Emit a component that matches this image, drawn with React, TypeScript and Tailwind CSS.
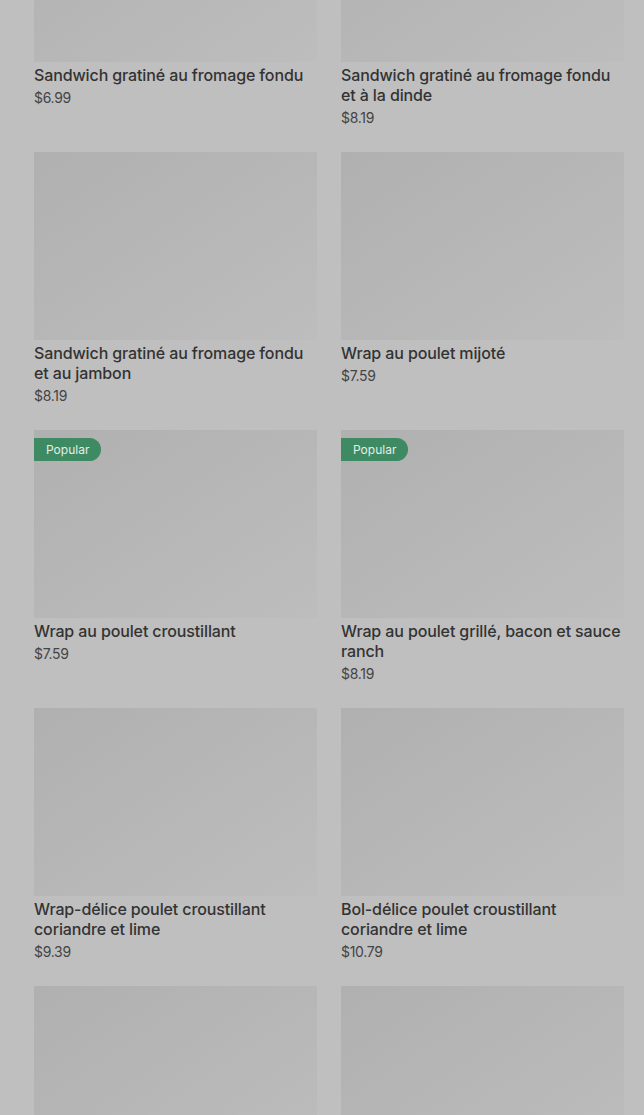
import React from 'react';

interface Item {
  name: string;
  price: string;
  popular?: boolean;
}

const items: Item[] = [
  { name: 'Sandwich gratiné au fromage fondu', price: '$6.99' },
  { name: 'Sandwich gratiné au fromage fondu et à la dinde', price: '$8.19' },
  { name: 'Sandwich gratiné au fromage fondu et au jambon', price: '$8.19' },
  { name: 'Wrap au poulet mijoté', price: '$7.59' },
  { name: 'Wrap au poulet croustillant', price: '$7.59', popular: true },
  { name: 'Wrap au poulet grillé, bacon et sauce ranch', price: '$8.19', popular: true },
  { name: 'Wrap-délice poulet croustillant coriandre et lime', price: '$9.39' },
  { name: 'Bol-délice poulet croustillant coriandre et lime', price: '$10.79' },
  { name: 'Bol au poulet', price: '$9.99' },
  { name: 'Salade au poulet', price: '$9.99' },
];

function MenuCard({ item }: { item: Item }) {
  return (
    <div className="flex flex-col">
      <div className="relative h-[188px] w-full bg-gradient-to-br from-[#b0b0b0] to-[#bdbdbd]">
        {item.popular && (
          <span className="absolute left-0 top-[8px] flex h-[23px] items-center rounded-r-full bg-[#3e8a62] pl-3 pr-3 text-[12px] text-[#e3efe8]">
            Popular
          </span>
        )}
      </div>
      <p className="mt-[3px] text-[16px] font-medium leading-[20px] tracking-[-0.12px] text-[#333333]">{item.name}</p>
      <p className="mt-[3px] text-[14px] leading-[20px] tracking-[-0.3px] text-[#444444]">{item.price}</p>
    </div>
  );
}

export default function App() {
  return (
    <div
      className="h-[1115px] overflow-hidden bg-[#bfbfbf]"
      style={{ fontFamily: 'Inter, "Noto Sans", sans-serif' }}
    >
      <div className="-mt-[126px] grid grid-cols-2 gap-x-6 gap-y-6 pl-[34px] pr-[20px]">
        {items.map((item, i) => (
          <MenuCard key={i} item={item} />
        ))}
      </div>
    </div>
  );
}
